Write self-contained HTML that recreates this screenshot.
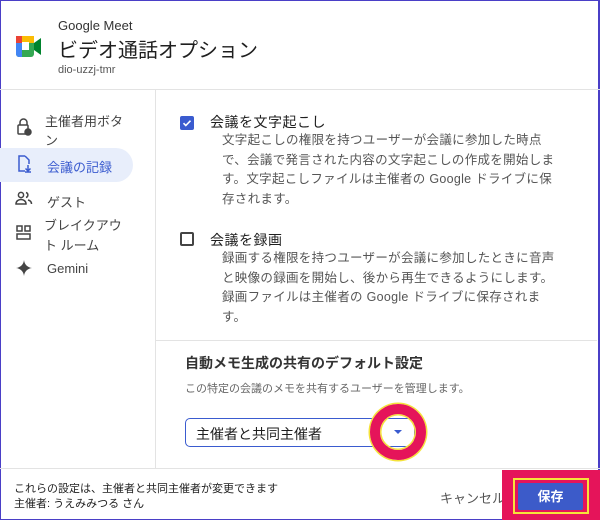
<!DOCTYPE html>
<html><head><meta charset="utf-8"><style>
*{box-sizing:border-box;margin:0;padding:0}
body{width:600px;height:520px;overflow:hidden;background:#fff;font-family:"Liberation Sans","Noto Sans CJK JP",sans-serif;color:#1f1f1f;position:relative}
.frame{position:absolute;left:0;top:0;width:600px;height:520px;border:1px solid #4a3fc7;border-right:2px solid #4a3fc7}
.abs{position:absolute}
.nav{font-size:13px;color:#444}
.desc{font-size:12.5px;color:#555;line-height:19.5px;white-space:nowrap;letter-spacing:0.3px}
</style></head><body>
<div class="frame"></div>
<svg class="abs" style="left:16px;top:36px" width="26" height="21" viewBox="0 0 26 21">
<rect x="0" y="0" width="18" height="21" rx="3" fill="#34a853"/>
<path d="M0 3a3 3 0 0 1 3-3h15v7H0z" fill="#fbbc04"/>
<path d="M0 7h6v14H3a3 3 0 0 1-3-3z" fill="#4285f4"/>
<path d="M0 0h6v7H0z" fill="#ea4335"/>
<rect x="6" y="6" width="7" height="8" fill="#fff"/>
<path d="M18 7l7-5v17l-7-5z" fill="#00832d"/>
</svg>
<div class="abs" style="left:58px;top:18px;font-size:13px;color:#333">Google Meet</div>
<div class="abs" style="left:58px;top:34px;font-size:20px;color:#1f1f1f">ビデオ通話オプション</div>
<div class="abs" style="left:58px;top:64px;font-size:11px;color:#555">dio-uzzj-tmr</div>
<div class="abs" style="left:0;top:89px;width:600px;height:1px;background:#e3e3e3"></div>
<div class="abs" style="left:155px;top:90px;width:1px;height:379px;background:#e3e3e3"></div>
<div class="abs" style="left:0;top:148px;width:133px;height:34px;border-radius:0 17px 17px 0;background:#e8eefb"></div>
<svg class="abs" style="left:16px;top:118px" width="16" height="18" viewBox="0 0 16 18" fill="none" stroke="#444" stroke-width="1.5"><path d="M4 7V4.5a3.5 3.5 0 0 1 7 0V7"/><rect x="2" y="7" width="10" height="9" rx="1"/><circle cx="12" cy="14" r="3" fill="#444"/></svg>
<div class="abs nav" style="left:45px;top:112px;line-height:19px;width:90px">主催者用ボタ<br>ン</div>
<svg class="abs" style="left:16px;top:155px" width="16" height="18" viewBox="0 0 16 18" fill="none" stroke="#3a5bcf" stroke-width="1.5"><path d="M9 1H3v15h6M9 1l4 4v4"/><path d="M12 10v6M9.5 13.5L12 16l2.5-2.5M9 17h6"/></svg>
<div class="abs nav" style="left:47px;top:157px;color:#3a5bcf">会議の記録</div>
<svg class="abs" style="left:15px;top:191px" width="18" height="14" viewBox="0 0 18 14" fill="none" stroke="#444" stroke-width="1.5"><circle cx="6" cy="4" r="2.6"/><path d="M1 13c0-3 2.5-4.5 5-4.5s5 1.5 5 4.5z"/><path d="M11 1.5a2.6 2.6 0 0 1 0 5M13 9c2 .5 3.5 2 3.5 4"/></svg>
<div class="abs nav" style="left:47px;top:192px">ゲスト</div>
<svg class="abs" style="left:16px;top:225px" width="15" height="15" viewBox="0 0 15 15" fill="none" stroke="#444" stroke-width="1.5"><rect x="1" y="1" width="5" height="5"/><rect x="9" y="1" width="5" height="5"/><rect x="1" y="9" width="13" height="5"/></svg>
<div class="abs nav" style="left:44px;top:216px;line-height:20px">ブレイクアウ<br>ト ルーム</div>
<svg class="abs" style="left:16px;top:260px" width="16" height="16" viewBox="0 0 16 16"><path d="M8 0C8.5 4.5 11.5 7.5 16 8 11.5 8.5 8.5 11.5 8 16 7.5 11.5 4.5 8.5 0 8 4.5 7.5 7.5 4.5 8 0z" fill="#444"/></svg>
<div class="abs nav" style="left:47px;top:261px">Gemini</div>
<div class="abs" style="left:180px;top:116px;width:14px;height:14px;border-radius:2px;background:#3a5bcf"></div>
<svg class="abs" style="left:180px;top:116px" width="14" height="14"><path d="M3.5 7.2l2.3 2.3 4.7-4.8" fill="none" stroke="#fff" stroke-width="1.6"/></svg>
<div class="abs" style="left:210px;top:112px;font-size:14px;letter-spacing:0.5px">会議を文字起こし</div>
<div class="abs desc" style="left:222px;top:131px">文字起こしの権限を持つユーザーが会議に参加した時点<br>で、会議で発言された内容の文字起こしの作成を開始しま<br>す。文字起こしファイルは主催者の Google ドライブに保<br>存されます。</div>
<div class="abs" style="left:180px;top:232px;width:14px;height:14px;border:2px solid #444;border-radius:2px"></div>
<div class="abs" style="left:210px;top:230px;font-size:14px;letter-spacing:0.5px">会議を録画</div>
<div class="abs desc" style="left:222px;top:249px">録画する権限を持つユーザーが会議に参加したときに音声<br>と映像の録画を開始し、後から再生できるようにします。<br>録画ファイルは主催者の Google ドライブに保存されま<br>す。</div>
<div class="abs" style="left:156px;top:340px;width:441px;height:1px;background:#e3e3e3"></div>
<div class="abs" style="left:185px;top:353px;font-size:14px;font-weight:bold;color:#333">自動メモ生成の共有のデフォルト設定</div>
<div class="abs" style="left:185px;top:380px;font-size:11px;color:#666">この特定の会議のメモを共有するユーザーを管理します。</div>
<div class="abs" style="left:185px;top:418px;width:230px;height:29px;border:1.5px solid #3a5bcf;border-radius:5px"></div>
<div class="abs" style="left:196px;top:424px;font-size:14px">主催者と共同主催者</div>
<div class="abs" style="left:394px;top:430px;width:0;height:0;border-left:4px solid transparent;border-right:4px solid transparent;border-top:4px solid #3a5bcf"></div>
<div class="abs" style="left:370px;top:404px;width:56px;height:56px;border-radius:50%;border:10px solid #e5145a;box-shadow:0 0 0 1.5px #f5e33a,inset 0 0 0 1.5px #f5e33a"></div>
<div class="abs" style="left:0;top:468px;width:600px;height:1px;background:#e3e3e3"></div>
<div class="abs" style="left:14px;top:482px;font-size:11px;line-height:15px;color:#222">これらの設定は、主催者と共同主催者が変更できます<br>主催者: うえみみつる さん</div>
<div class="abs" style="left:440px;top:488px;font-size:13px;color:#555">キャンセル</div>
<div class="abs" style="left:502px;top:470px;width:98px;height:50px;background:#e5145a"></div>
<div class="abs" style="left:513px;top:478px;width:76px;height:36px;border:2px solid #f5e33a;background:#e5145a"></div>
<div class="abs" style="left:518px;top:483px;width:65px;height:27px;background:#3c5bc9;border-radius:2px;color:#fff;font-size:13px;font-weight:bold;text-align:center;line-height:27px">保存</div>
</body></html>
